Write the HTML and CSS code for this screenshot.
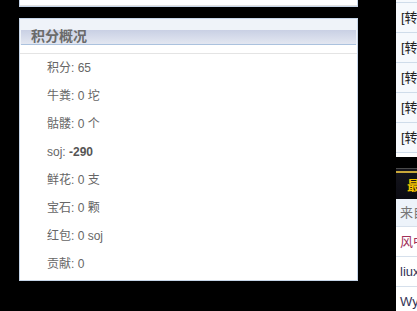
FILE: index.html
```html
<!DOCTYPE html>
<html lang="zh-CN">
<head>
    <meta charset="UTF-8">
    <meta name="viewport" content="width=device-width, initial-scale=1.0">
    <title>积分概况</title>
    <link rel="stylesheet" href="styles.css">
</head>
<body>
    <div class="page">
        <div class="main">
            <div class="box box-prev">
                <div class="box-end"></div>
            </div>
            <div class="box box-score">
                <div class="box-head">
                    <h3 class="box-title">积分概况</h3>
                </div>
                <div class="box-gap"></div>
                <ul class="score-list">
                    <li>积分: 65</li>
                    <li>牛粪: 0 坨</li>
                    <li>骷髅: 0 个</li>
                    <li>soj: <b>-290</b></li>
                    <li>鲜花: 0 支</li>
                    <li>宝石: 0 颗</li>
                    <li>红包: 0 soj</li>
                    <li>贡献: 0</li>
                </ul>
            </div>
        </div>
        <div class="side">
            <div class="side-box topics">
                <div class="topic">[转帖] 上一条</div>
                <div class="topic">[转帖] 算法竞赛入门</div>
                <div class="topic">[转帖] 动态规划总结</div>
                <div class="topic">[转帖] 图论模板</div>
                <div class="topic">[转帖] 线段树讲解</div>
                <div class="topic">[转帖] 数论基础</div>
            </div>
            <div class="side-box visitors">
                <div class="side-head">最近访客</div>
                <div class="visitor visitor-top">来自各地的朋友</div>
                <div class="visitor visitor-hot">风中的少年</div>
                <div class="visitor">liuxin</div>
                <div class="visitor">Wyatt</div>
            </div>
        </div>
    </div>
</body>
</html>
```

FILE: styles.css
```css
html, body {
    margin: 0;
    padding: 0;
    background: #000;
    overflow: hidden;
}

body {
    font-family: "Liberation Sans", "Noto Sans CJK SC", sans-serif;
    font-size: 12px;
    color: #666;
}

.page {
    display: flex;
    align-items: flex-start;
    width: 620px;
}

.main {
    width: 339px;
    margin-left: 19px;
}

.box {
    background: #fff;
    border: 1px solid #c6d5e8;
    box-sizing: border-box;
}

.box-prev {
    border-top: none;
    height: 7px;
    margin-bottom: 11px;
}

.box-end {
    height: 5px;
    border-bottom: 1px solid #e2e2e2;
}

.box-score {
    padding-bottom: 2px;
}

.box-head {
    background: #eff3f9;
    padding: 11px 1px 0;
}

.box-title {
    margin: 0;
    height: 14px;
    line-height: 13px;
    padding-left: 10px;
    font-size: 14px;
    font-weight: bold;
    color: #6a6a6a;
    background: linear-gradient(#c9d0e4, #e3e7f1);
    border-bottom: 1px solid #abc2de;
}

.box-gap {
    height: 8px;
    border-bottom: 1px solid #e4e4e4;
}

.score-list {
    list-style: none;
    margin: 0;
    padding: 0 0 0 27px;
}

.score-list li {
    height: 28px;
    line-height: 28px;
}

.score-list b {
    color: #555;
}

.side {
    width: 200px;
    margin-left: 38px;
}

.side-box {
    background: #fff;
}

.topics {
    margin-top: -27px;
    padding-bottom: 4px;
    margin-bottom: 11px;
}

.topic {
    height: 29px;
    line-height: 29px;
    padding-left: 5px;
    font-size: 13px;
    color: #222;
    background: #f6f9fd;
    border-bottom: 1px solid #cfdcea;
    white-space: nowrap;
    overflow: hidden;
}

.side-head {
    height: 26px;
    line-height: 26px;
    padding-left: 11px;
    font-size: 13px;
    font-weight: bold;
    color: #f5c400;
    background: linear-gradient(#15151d, #0b0b12);
    border-top: 1px solid #4a4a4a;
    border-bottom: 0;
    box-shadow: inset 0 2px 0 #15151d, inset 0 4px 0 #c9a83a;
    padding-top: 4px;
}

.visitor {
    height: 29px;
    line-height: 29px;
    padding-left: 4px;
    font-size: 13px;
    color: #335;
    border-bottom: 1px solid #d6e0ec;
    white-space: nowrap;
    overflow: hidden;
}

.visitor-top {
    height: 27px;
    line-height: 27px;
    color: #777;
    background: #edf3fa;
}

.visitor-hot {
    color: #a0305a;
}
```
